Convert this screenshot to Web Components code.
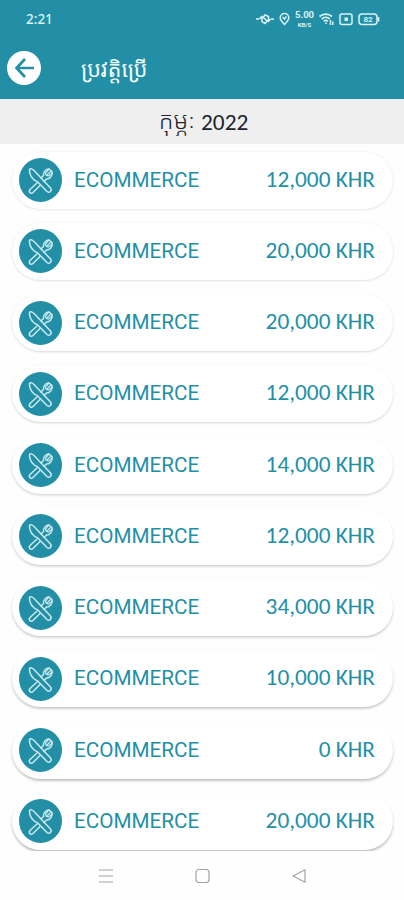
<!DOCTYPE html>
<html lang="km">
<head>
<meta charset="utf-8">
<meta name="viewport" content="width=device-width, initial-scale=1">
<title>ប្រវត្តិប្រើ</title>
<style>
  :root {
    --color-teal: #238fa6;
    --color-ink: #20242c;
    --color-nav: #a3a3a3;
  }
  body {
    margin: 0;
    background: #fefefe;
    font-family: Roboto, "Noto Sans Khmer", "Khmer OS", sans-serif;
  }
</style>
</head>
<body>
<history-screen></history-screen>

<script>
class StatusBar extends HTMLElement {
    constructor() {
        super();
        this.attachShadow({ mode: 'open' });
    }

    connectedCallback() {
        this.shadowRoot.innerHTML = `
            <style>
            :host {
                display: flex;
                justify-content: space-between;
                align-items: center;
                box-sizing: border-box;
                height: 37px;
                padding: 0 24px 0 26px;
                color: #d9f3f6;
                font: 500 13.5px/16px "Noto Sans", sans-serif;
            }
            .status__icons {
                display: flex;
                align-items: center;
                gap: 5px;
            }
            svg {
                display: block;
                fill: none;
                stroke: currentColor;
                stroke-width: 1.5;
            }
            .status__speed {
                display: flex;
                flex-direction: column;
                align-items: center;
                width: 19px;
                font: 700 9.5px/11.5px Roboto, sans-serif;
            }
            .status__speed small {
                font-size: 6px;
                line-height: 7px;
            }
            </style>
            <span><slot></slot></span>
            <div class="status__icons">
                <svg width="18" height="14" viewBox="0 0 18 14">
                    <path d="M0 7h3M15 7h3M3.500 7l2.500-3M14.500 7L12 10M6 9.500V6.500L9 3l3.500 1.500v3L9 11.500zM7 5l4.500 4.500"/>
                </svg>
                <svg width="11" height="14" viewBox="0 0 11 14">
                    <path d="M5.500 12.500C2.500 9.500 1.200 8 1.200 5.800a4.300 4.300 0 0 1 8.600 0c0 2.200-1.300 3.700-4.300 6.700z"/>
                    <path d="M3.700 5l1.800 2 2-2.500"/>
                </svg>
                <div class="status__speed"><span>5.00</span><small>KB/S</small></div>
                <svg width="15" height="14" viewBox="0 0 15 14">
                    <path d="M.5 4.500a9.500 9.500 0 0 1 12.500 0M2.700 7a6 6 0 0 1 8 0M4.800 9.300a3 3 0 0 1 4 0" stroke-width="1.700"/>
                    <path d="M7 12v-1.500M11.500 8v5M13.800 9.500V13"/>
                </svg>
                <svg width="14" height="14" viewBox="0 0 14 14">
                    <rect x="1" y="2" width="12" height="10.500" rx="2"/>
                    <rect x="6" y="6" width="2.500" height="2.500" fill="currentColor" stroke-width="1"/>
                </svg>
                <svg width="22" height="14" viewBox="0 0 22 14">
                    <rect x="1" y="2" width="18" height="10.500" rx="3"/>
                    <path d="M20.600 5v4.500"/>
                    <text x="10" y="10" text-anchor="middle" font-family="Roboto" font-size="8" font-weight="700" fill="currentColor" stroke="none">82</text>
                </svg>
            </div>
        `;
    }
}

class TitleBar extends HTMLElement {
    constructor() {
        super();
        this.attachShadow({ mode: 'open' });
    }

    connectedCallback() {
        this.shadowRoot.innerHTML = `
            <style>
            :host {
                display: flex;
                align-items: center;
                box-sizing: border-box;
                height: 62px;
                padding: 0 7px;
                gap: 40px;
                color: #f3fdff;
                font-size: 21.5px;
                line-height: 30px;
            }
            button {
                width: 34px;
                height: 34px;
                padding: 0;
                border: 0;
                border-radius: 50%;
                background: #fff;
                color: var(--color-teal);
            }
            svg {
                display: block;
            }
            .title__text {
                padding-top: 3px;
            }
            </style>
            <button aria-label="Back">
                <svg width="34" height="34" viewBox="0 0 34 34" fill="none" stroke="currentColor" stroke-width="2.700">
                    <path d="M27 17H9.500M18 8L9.500 17l8.500 9"/>
                </svg>
            </button>
            <span class="title__text"><slot></slot></span>
        `;
    }
}

class MonthHeading extends HTMLElement {
    constructor() {
        super();
        this.attachShadow({ mode: 'open' });
    }

    connectedCallback() {
        this.shadowRoot.innerHTML = `
            <style>
            :host {
                display: flex;
                justify-content: center;
                align-items: center;
                gap: 6px;
                box-sizing: border-box;
                height: 45px;
                padding-left: 3px;
                background: #efefef;
                color: var(--color-ink);
                font: 23.3px/28px Carlito, Lato, sans-serif;
            }
            .heading__month {
                padding-bottom: 3px;
                font: 300 24px/28px "Noto Sans Khmer", "Khmer OS", sans-serif;
            }
            </style>
            <span class="heading__month"><slot></slot></span>
            <span><slot name="year"></slot></span>
        `;
    }
}

class HistoryRow extends HTMLElement {
    constructor() {
        super();
        this.attachShadow({ mode: 'open' });
    }

    connectedCallback() {
        // shadows get deeper further down the screen
        const depth = parseInt(this.getAttribute('depth'), 10);
        const alpha = 0.12 + depth * 0.014;
        const drop = 0.6 + depth * 0.17;

        this.shadowRoot.innerHTML = `
            <style>
            :host {
                display: flex;
                align-items: center;
                flex: none;
                box-sizing: border-box;
                height: 57px;
                padding: 0 18px 0 7px;
                border-radius: 29px;
                background: #fff;
                box-shadow: 0 ${drop}px 2.5px rgba(0, 0, 0, ${alpha});
                color: var(--color-teal);
            }
            .row__icon {
                display: block;
                flex: none;
                margin-right: 12px;
            }
            .row__label {
                flex: 1;
                padding-bottom: 1px;
                font: 20.7px/28px Roboto, sans-serif;
            }
            .row__amount {
                padding-bottom: 3px;
                font: 23.3px/28px Carlito, Lato, sans-serif;
            }
            </style>
            <svg class="row__icon" width="43" height="44" viewBox="0 0 43 44">
                <ellipse cx="21.500" cy="22" rx="21.500" ry="22" fill="#238fa6"/>
                <g fill="none" stroke="#c9e9ee" stroke-width="1.500" stroke-linejoin="round" stroke-linecap="round">
                    <path d="M10.500 11.500c-.3 4 1.500 7.500 4.500 10.300l3.500 2 9.500 9.700c2.500 2 5.500-1 3.500-3.500L15 12.500c-1.500-1.500-3.500-2.500-4.500-1z"/>
                    <path d="M18 25l-7 6.500c-2 2.500 1 5 3 3l7-7M22 20l2.500-2.500c-.5-3 2-6.500 5.500-6.500l3 2.500c1 4-2 7.500-5.500 7.500L25 23.500"/>
                    <path d="M30 11l-3.500 4M32 13l-3.500 3.500M33.500 15l-4 3M26.500 15c0 2 1.500 3 3 3" stroke-width="1.200"/>
                </g>
            </svg>
            <span class="row__label"><slot></slot></span>
            <span class="row__amount"><slot name="amount"></slot></span>
        `;
    }
}

class NavBar extends HTMLElement {
    constructor() {
        super();
        this.attachShadow({ mode: 'open' });
    }

    connectedCallback() {
        this.shadowRoot.innerHTML = `
            <style>
            :host {
                display: flex;
                justify-content: center;
                align-items: center;
                gap: 81px;
                height: 49px;
                background: #fefefe;
                color: var(--color-nav);
            }
            svg {
                display: block;
                fill: none;
                stroke: currentColor;
                stroke-width: 1.200;
            }
            </style>
            <svg width="16" height="16" viewBox="0 0 16 16"><path d="M2 2h14M2 8h14M2 14h14"/></svg>
            <svg width="16" height="16" viewBox="0 0 16 16"><rect x="2" y="1.500" width="13" height="13" rx="3"/></svg>
            <svg width="16" height="16" viewBox="0 0 16 16"><path d="M14 1.700v12.600L2 8z" stroke-linejoin="round"/></svg>
        `;
    }
}

class HistoryScreen extends HTMLElement {
    constructor() {
        super();
        this.attachShadow({ mode: 'open' });
    }

    connectedCallback() {
        const amounts = ['12,000', '20,000', '20,000', '12,000', '14,000', '12,000', '34,000', '10,000', '0', '20,000'];
        const rows = amounts.map((amount, i) => `
            <history-row depth="${i}">ECOMMERCE<span slot="amount">${amount} KHR</span></history-row>
        `).join('');

        this.shadowRoot.innerHTML = `
            <style>
            :host {
                display: flex;
                flex-direction: column;
                height: 900px;
                overflow: hidden;
            }
            header {
                background: var(--color-teal);
            }
            main {
                flex: 1;
                display: flex;
                flex-direction: column;
                gap: 14.25px;
                min-height: 0;
                overflow: hidden;
                box-sizing: border-box;
                padding: 7.5px 11px 0 12px;
            }
            </style>
            <header>
                <status-bar>2:21</status-bar>
                <title-bar>ប្រវត្តិប្រើ</title-bar>
            </header>
            <month-heading>កុម្ភៈ<span slot="year">2022</span></month-heading>
            <main>${rows}</main>
            <nav-bar></nav-bar>
        `;
    }
}

customElements.define('status-bar', StatusBar);
customElements.define('title-bar', TitleBar);
customElements.define('month-heading', MonthHeading);
customElements.define('history-row', HistoryRow);
customElements.define('nav-bar', NavBar);
customElements.define('history-screen', HistoryScreen);
</script>
</body>
</html>
